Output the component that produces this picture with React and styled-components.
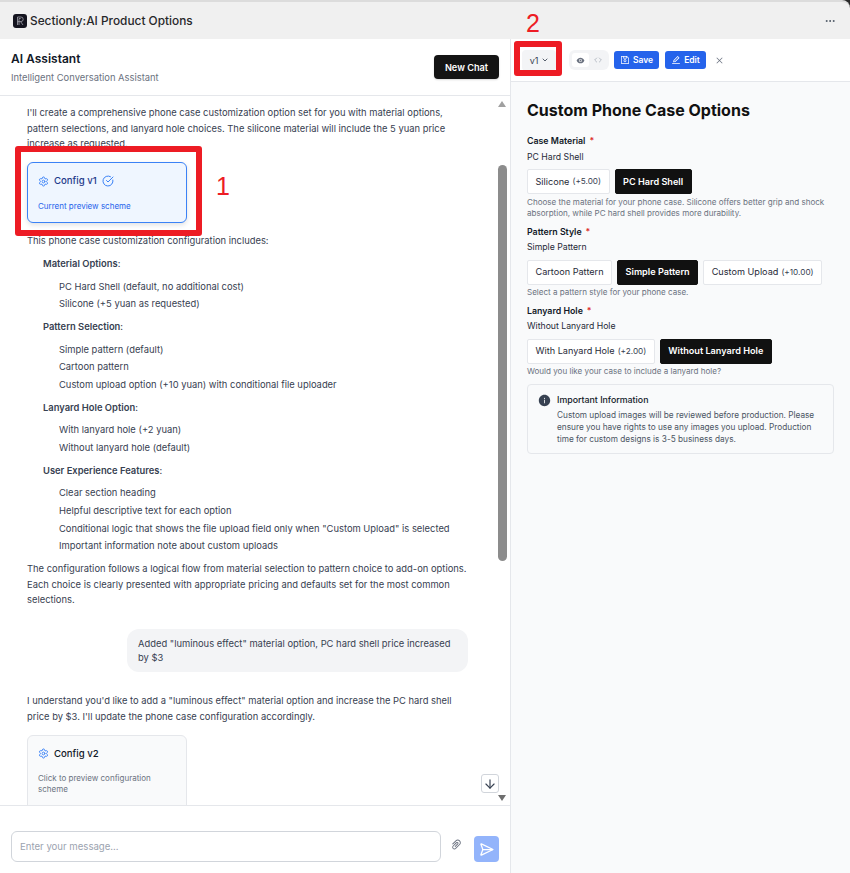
import styled, { createGlobalStyle } from "styled-components";
import { ArrowDown, ChevronDown, CircleCheckBig, Code, Ellipsis, SendHorizontal, Settings } from "lucide-react";
import {
  AiFillEye,
  AiFillInfoCircle,
  AiOutlineClose,
  AiOutlineEdit,
  AiOutlinePaperClip,
  AiOutlineSave,
} from "react-icons/ai";

const GlobalStyle = createGlobalStyle`
  html, body { margin: 0; padding: 0; background: #fff; }
  body { font-family: Inter, "Liberation Sans", sans-serif; color: #111827; }
  * { box-sizing: border-box; }
`;

const Shell = styled.div`
  position: relative;
  width: 850px;
  height: 873px;
  overflow: hidden;
  background: #2a2a2a;
`;
const TitleBar = styled.header`
  height: 39px;
  display: flex;
  align-items: center;
  justify-content: space-between;
  padding: 0 14px 0 13px;
  background: #f0f0f0;
  border-top: 2px solid #dcdcdc;
  border-top-right-radius: 8px;
`;
const Brand = styled.div`
  display: flex;
  align-items: center;
  gap: 3px;
  font-size: 11.85px;
  font-weight: 500;
  color: #27272a;
`;
const Columns = styled.div`
  display: grid;
  grid-template-columns: 511px 339px;
  height: 834px;
  background: #fff;
`;
const ChatPanel = styled.section`
  position: relative;
  display: flex;
  flex-direction: column;
  min-height: 0;
  border-right: 1px solid #e5e7eb;
`;
const ChatHeader = styled.div`
  height: 57px;
  flex: none;
  display: flex;
  align-items: center;
  justify-content: space-between;
  padding: 0 11px;
  border-bottom: 1px solid #e5e7eb;
`;
const ChatTitle = styled.h2`
  margin: 2px 0 6px;
  font-size: 12px;
  line-height: 14px;
  font-weight: 600;
`;
const ChatSubtitle = styled.p`
  margin: 0;
  font-size: 9.4px;
  line-height: 12px;
  color: #6b7280;
`;
const NewChat = styled.button`
  width: 65px;
  height: 24px;
  padding: 0;
  border: 0;
  border-radius: 4px;
  background: #141414;
  color: #fff;
  font: 600 9.2px Inter, sans-serif;
  box-shadow: 0 1px 2px rgba(0, 0, 0, 0.15);
`;
const Messages = styled.div`
  flex: 1;
  min-height: 0;
  overflow: hidden;
  padding: 9px 42px 0 27px;
  font-size: 9.4px;
  line-height: 15.5px;
  color: #374151;
`;
const Para = styled.p`
  margin: ${(p) => p.$before || 0}px 0 0;
`;
const ConfigCard = styled.div`
  width: 160px;
  height: ${(p) => (p.$active ? 61 : 76)}px;
  margin: 10.5px 0 10px;
  padding: 10px 10px;
  border: 1px solid ${(p) => (p.$active ? "#3b82f6" : "#e5e7eb")};
  border-radius: 6px;
  background: ${(p) => (p.$active ? "#eff6ff" : "#f9fafb")};
  box-shadow: ${(p) => (p.$active ? "0 2px 5px rgba(0,0,0,0.12)" : "none")};
`;
const CardTitle = styled.div`
  display: flex;
  align-items: center;
  gap: 5px;
  height: 16px;
  font-size: 9.6px;
  font-weight: 500;
  color: ${(p) => (p.$active ? "#1e3a8a" : "#111827")};
  svg { color: #3b82f6; flex: none; }
`;
const CardNote = styled.div`
  margin-top: 11.5px;
  font-size: 8px;
  line-height: 11px;
  color: ${(p) => (p.$active ? "#2563eb" : "#6b7280")};
`;
const SectionHead = styled.p`
  margin: 7.5px 0 7px 16px;
  font-weight: 600;
  color: #374151;
  span { font-weight: 400; }
`;
const ListItem = styled.p`
  margin: 0 0 2.1px 32px;
`;
const UserRow = styled.div`
  display: flex;
  justify-content: flex-end;
  margin: 21px 0 21.5px;
`;
const Bubble = styled.div`
  width: 341px;
  padding: 8.5px 11px 6.5px;
  border-radius: 12px;
  background: #f3f4f6;
  line-height: 14px;
`;
const ScrollTrack = styled.div`
  position: absolute;
  top: 57px;
  right: 0;
  bottom: 68px;
  width: 12px;
  background: #fff;
`;
const ScrollThumb = styled.div`
  position: absolute;
  top: 69px;
  left: 0;
  width: 9px;
  height: 396px;
  border-radius: 5px;
  background: #8c8c8c;
`;
const ScrollArrow = styled.div`
  position: absolute;
  left: 0;
  width: 0;
  height: 0;
  border-left: 4.5px solid transparent;
  border-right: 4.5px solid transparent;
  ${(p) =>
    p.$down
      ? "bottom: 4px; border-top: 6px solid #6e6e6e;"
      : "top: 5px; border-bottom: 6px solid #a0a0a0;"}
`;
const JumpButton = styled.button`
  position: absolute;
  right: 11px;
  bottom: 80px;
  width: 18px;
  height: 19px;
  padding: 0;
  display: grid;
  place-items: center;
  border: 1px solid #d1d5db;
  border-radius: 3px;
  background: #fff;
  color: #374151;
`;
const Composer = styled.div`
  height: 68px;
  flex: none;
  display: flex;
  align-items: flex-end;
  padding: 0 11px 11px;
  border-top: 1px solid #e5e7eb;
  background: #fff;
`;
const MessageInput = styled.div`
  flex: none;
  width: 430px;
  height: 31px;
  display: flex;
  align-items: center;
  padding: 0 8px;
  border: 1px solid #d1d5db;
  border-radius: 6px;
  font-size: 9.6px;
  color: #9ca3af;
`;
const AttachIcon = styled.div`
  width: 13px;
  height: 27px;
  margin: 0 11px 4px 9px;
  display: grid;
  place-items: center;
  color: #6b7280;
`;
const SendButton = styled.button`
  width: 26px;
  height: 26px;
  padding: 0;
  display: grid;
  place-items: center;
  border: 0;
  border-radius: 4px;
  background: #93b4fb;
  color: #fff;
`;

const PreviewPanel = styled.section`
  display: flex;
  flex-direction: column;
  min-height: 0;
`;
const Toolbar = styled.div`
  height: 43px;
  flex: none;
  display: flex;
  align-items: center;
  padding: 0 0 0 11px;
  border-bottom: 1px solid #e5e7eb;
`;
const VersionSelect = styled.div`
  width: 34px;
  height: 21px;
  display: flex;
  align-items: center;
  justify-content: center;
  gap: 3px;
  margin-right: 13px;
  padding-left: 1px;
  border-radius: 4px;
  background: #f3f4f6;
  font-size: 9px;
  color: #374151;
`;
const ViewToggle = styled.div`
  width: 40px;
  height: 20px;
  display: flex;
  align-items: center;
  margin-right: 5px;
  padding: 3px;
  border-radius: 6px;
  background: #f3f4f6;
`;
const ToggleItem = styled.div`
  flex: 1;
  height: 14px;
  display: grid;
  place-items: center;
  border-radius: 3px;
  background: ${(p) => (p.$active ? "#fff" : "transparent")};
  color: ${(p) => (p.$active ? "#6b7280" : "#9ca3af")};
`;
const ActionButton = styled.button`
  width: ${(p) => p.$w}px;
  height: 18px;
  margin-right: 6px;
  padding: 0;
  display: flex;
  align-items: center;
  justify-content: center;
  gap: 3px;
  border: 0;
  border-radius: 3px;
  background: #2563eb;
  color: #fff;
  font: 600 8.5px Inter, sans-serif;
`;
const CloseIcon = styled.div`
  display: grid;
  place-items: center;
  margin-left: 3px;
  color: #6b7280;
`;
const PreviewBody = styled.div`
  flex: 1;
  padding: 18px 16px 0 16px;
  background: #f9fafb;
`;
const Heading = styled.h1`
  margin: 0 0 15px;
  font-size: 16px;
  line-height: 20px;
  font-weight: 700;
  color: #111;
`;
const Label = styled.div`
  font-size: 8.8px;
  line-height: 12px;
  font-weight: 600;
  color: #111827;
  span { margin-left: 4px; color: #dc2626; }
`;
const Value = styled.div`
  margin-top: 3.5px;
  font-size: 8.7px;
  line-height: 12px;
  color: #1f2937;
`;
const OptionRow = styled.div`
  display: flex;
  gap: 5px;
  margin-top: 6.5px;
`;
const Option = styled.div`
  height: 25px;
  display: flex;
  align-items: center;
  padding: 0 7.5px 1px;
  gap: 3px;
  border: 1px solid ${(p) => (p.$selected ? "#111" : "#e5e7eb")};
  border-radius: 2px;
  background: ${(p) => (p.$selected ? "#111" : "#fff")};
  color: ${(p) => (p.$selected ? "#fff" : "#1f2937")};
  font-size: 9.15px;
  font-weight: ${(p) => (p.$selected ? 600 : 400)};
  white-space: nowrap;
  small { font-size: 8.2px; color: #374151; }
`;
const Help = styled.p`
  margin: 2.5px 0 ${(p) => p.$after}px;
  font-size: 8.05px;
  line-height: 11px;
  color: #6b7280;
`;
const InfoBox = styled.div`
  display: flex;
  gap: 6px;
  width: 307px;
  height: 70px;
  margin-top: 6.5px;
  padding: 9px 10px;
  border: 1px solid #e5e7eb;
  border-radius: 4px;
  background: #f9fafb;
  svg { flex: none; color: #374151; }
`;
const InfoTitle = styled.div`
  font-size: 8.8px;
  line-height: 12px;
  font-weight: 500;
  color: #111827;
`;
const InfoText = styled.div`
  margin-top: 3px;
  font-size: 8.25px;
  line-height: 12px;
  color: #4b5563;
`;
const Marker = styled.div`
  position: absolute;
  left: ${(p) => p.$x}px;
  top: ${(p) => p.$y}px;
  width: ${(p) => p.$w}px;
  height: ${(p) => p.$h}px;
  border: 6px solid #ed1c24;
  border-radius: 3px;
  pointer-events: none;
`;
const MarkerNumber = styled.div`
  position: absolute;
  left: ${(p) => p.$x}px;
  top: ${(p) => p.$y}px;
  font: 400 25px/28px "Liberation Sans", sans-serif;
  color: #ed1c24;
`;

const Logo = () => (
  <svg width="14" height="14" viewBox="0 0 14 14" fill="none">
    <rect width="14" height="14" rx="3" fill="#14141f" />
    <path d="M4.5 11V3h3.4a2.3 2.3 0 0 1 0 4.6H4.5M7.6 7.6 10 11M6 11V4.500h1.700" stroke="#a3a3ad" strokeWidth="0.8" />
  </svg>
);

const App = () => {
  return (
    <Shell>
      <GlobalStyle />
      <TitleBar>
        <Brand>
          <Logo />
          Sectionly:AI Product Options
        </Brand>
        <Ellipsis size={12} color="#4b5563" />
      </TitleBar>
      <Columns>
        <ChatPanel>
          <ChatHeader>
            <div>
              <ChatTitle>AI Assistant</ChatTitle>
              <ChatSubtitle>Intelligent Conversation Assistant</ChatSubtitle>
            </div>
            <NewChat>New Chat</NewChat>
          </ChatHeader>
          <Messages>
            <Para>
              I'll create a comprehensive phone case customization option set for you with material options,
              pattern selections, and lanyard hole choices. The silicone material will include the 5 yuan price
              increase as requested.
            </Para>
            <ConfigCard $active>
              <CardTitle $active>
                <Settings size={11} />
                Config v1
                <CircleCheckBig size={12} color="#3b82f6" />
              </CardTitle>
              <CardNote $active>Current preview scheme</CardNote>
            </ConfigCard>
            <Para>This phone case customization configuration includes:</Para>
            <SectionHead>Material Options<span>:</span></SectionHead>
            <ListItem>PC Hard Shell (default, no additional cost)</ListItem>
            <ListItem>Silicone (+5 yuan as requested)</ListItem>
            <SectionHead>Pattern Selection<span>:</span></SectionHead>
            <ListItem>Simple pattern (default)</ListItem>
            <ListItem>Cartoon pattern</ListItem>
            <ListItem>Custom upload option (+10 yuan) with conditional file uploader</ListItem>
            <SectionHead>Lanyard Hole Option<span>:</span></SectionHead>
            <ListItem>With lanyard hole (+2 yuan)</ListItem>
            <ListItem>Without lanyard hole (default)</ListItem>
            <SectionHead>User Experience Features<span>:</span></SectionHead>
            <ListItem>Clear section heading</ListItem>
            <ListItem>Helpful descriptive text for each option</ListItem>
            <ListItem>Conditional logic that shows the file upload field only when "Custom Upload" is selected</ListItem>
            <ListItem>Important information note about custom uploads</ListItem>
            <Para $before={7.5}>
              The configuration follows a logical flow from material selection to pattern choice to add-on options.
              Each choice is clearly presented with appropriate pricing and defaults set for the most common
              selections.
            </Para>
            <UserRow>
              <Bubble>Added "luminous effect" material option, PC hard shell price increased by $3</Bubble>
            </UserRow>
            <Para>
              I understand you'd like to add a "luminous effect" material option and increase the PC hard shell
              price by $3. I'll update the phone case configuration accordingly.
            </Para>
            <ConfigCard>
              <CardTitle>
                <Settings size={11} />
                Config v2
              </CardTitle>
              <CardNote>Click to preview configuration scheme</CardNote>
            </ConfigCard>
          </Messages>
          <ScrollTrack>
            <ScrollArrow />
            <ScrollThumb />
            <ScrollArrow $down />
          </ScrollTrack>
          <JumpButton>
            <ArrowDown size={14} />
          </JumpButton>
          <Composer>
            <MessageInput>Enter your message...</MessageInput>
            <AttachIcon>
              <AiOutlinePaperClip size={13} />
            </AttachIcon>
            <SendButton>
              <SendHorizontal size={15} />
            </SendButton>
          </Composer>
        </ChatPanel>
        <PreviewPanel>
          <Toolbar>
            <VersionSelect>
              v1
              <ChevronDown size={8} strokeWidth={2.5} />
            </VersionSelect>
            <ViewToggle>
              <ToggleItem $active>
                <AiFillEye size={9} />
              </ToggleItem>
              <ToggleItem>
                <Code size={8} />
              </ToggleItem>
            </ViewToggle>
            <ActionButton $w={45}>
              <AiOutlineSave size={10} />
              Save
            </ActionButton>
            <ActionButton $w={41}>
              <AiOutlineEdit size={10} />
              Edit
            </ActionButton>
            <CloseIcon>
              <AiOutlineClose size={9} />
            </CloseIcon>
          </Toolbar>
          <PreviewBody>
            <Heading>Custom Phone Case Options</Heading>
            <Label>Case Material<span>*</span></Label>
            <Value>PC Hard Shell</Value>
            <OptionRow>
              <Option>Silicone <small>(+5.00)</small></Option>
              <Option $selected>PC Hard Shell</Option>
            </OptionRow>
            <Help $after={7}>
              Choose the material for your phone case. Silicone offers better grip and shock absorption, while PC
              hard shell provides more durability.
            </Help>
            <Label>Pattern Style<span>*</span></Label>
            <Value>Simple Pattern</Value>
            <OptionRow>
              <Option>Cartoon Pattern</Option>
              <Option $selected>Simple Pattern</Option>
              <Option>Custom Upload <small>(+10.00)</small></Option>
            </OptionRow>
            <Help $after={6.5}>Select a pattern style for your phone case.</Help>
            <Label>Lanyard Hole<span>*</span></Label>
            <Value>Without Lanyard Hole</Value>
            <OptionRow>
              <Option>With Lanyard Hole <small>(+2.00)</small></Option>
              <Option $selected>Without Lanyard Hole</Option>
            </OptionRow>
            <Help $after={0}>Would you like your case to include a lanyard hole?</Help>
            <InfoBox>
              <AiFillInfoCircle size={13} />
              <div>
                <InfoTitle>Important Information</InfoTitle>
                <InfoText>
                  Custom upload images will be reviewed before production. Please ensure you have rights to use any
                  images you upload. Production time for custom designs is 3-5 business days.
                </InfoText>
              </div>
            </InfoBox>
          </PreviewBody>
        </PreviewPanel>
      </Columns>
      <Marker $x={15} $y={146} $w={187} $h={90} />
      <MarkerNumber $x={216} $y={172}>1</MarkerNumber>
      <Marker $x={514} $y={41} $w={48} $h={35} />
      <MarkerNumber $x={526} $y={9}>2</MarkerNumber>
    </Shell>
  );
};

export default App;
